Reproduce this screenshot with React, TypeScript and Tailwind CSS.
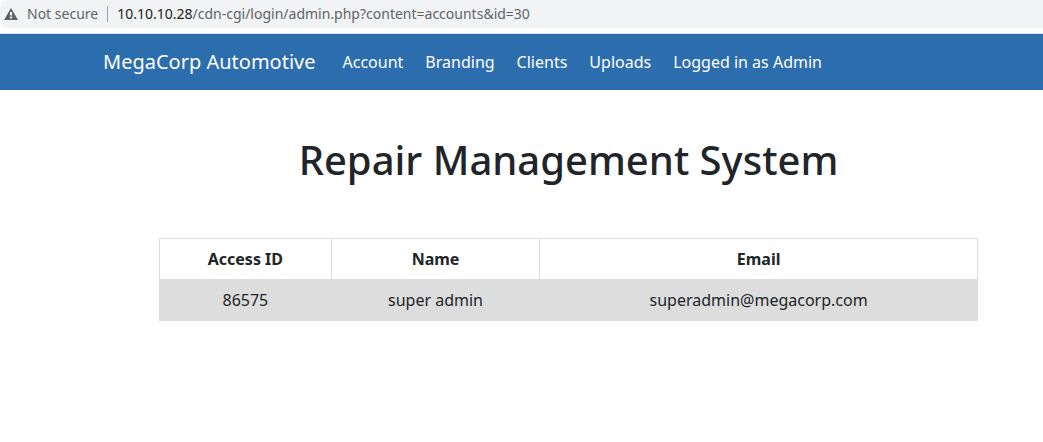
const links = ["Account", "Branding", "Clients", "Uploads", "Logged in as Admin"];

const accounts = [{ id: "86575", name: "super admin", email: "superadmin@megacorp.com" }];

function AddressBar() {
  return (
    <div className="border-b border-[#dadce0] bg-white pb-[5px]">
      <div className="flex h-7 items-center rounded-l-lg bg-[#f1f3f4] pl-1 text-sm text-[#5f6368]">
        <svg aria-hidden="true" viewBox="0 0 14 12" className="h-3 w-3.5 shrink-0" fill="#5f6368">
          <path fillRule="evenodd" d="M7 0 L14 12 H0 Z M6 4 V7.6 H8 V4 Z M6 8.6 V10.4 H8 V8.6 Z" />
        </svg>
        <span className="ml-[9px]">Not secure</span>
        <span className="mx-[9px] h-4 w-px bg-[#9aa0a6]" />
        <span className="whitespace-nowrap">
          <span className="text-[#202124]">10.10.10.28</span>/cdn-cgi/login/admin.php?content=accounts&amp;id=30
        </span>
      </div>
    </div>
  );
}

export default function App() {
  return (
    <div className="min-h-screen bg-white font-['Noto_Sans',sans-serif] text-[#212529]">
      <AddressBar />
      <nav className="flex h-14 items-center bg-[#2c6dad] pl-[103px] text-white">
        <a href="#home" className="mr-4 text-xl">MegaCorp Automotive</a>
        <ul className="flex">
          {links.map((label) => (
            <li key={label}>
              <a href="#section" className="px-[11px]">{label}</a>
            </li>
          ))}
        </ul>
      </nav>
      <main className="pt-[46px] pr-[65px] pl-[159px]">
        <h1 className="text-center text-[40px] leading-12 font-medium">Repair Management System</h1>
        <table className="mt-[54px] w-full border-collapse text-center">
          <thead>
            <tr>
              <th className="w-[21%] border border-[#dddddd] p-2 font-bold">Access ID</th>
              <th className="border border-[#dddddd] p-2 font-bold">Name</th>
              <th className="border border-[#dddddd] p-2 font-bold">Email</th>
            </tr>
          </thead>
          <tbody>
            {accounts.map((account) => (
              <tr key={account.id} className="bg-[#dddddd]">
                <td className="border border-[#dddddd] p-2">{account.id}</td>
                <td className="border border-[#dddddd] p-2">{account.name}</td>
                <td className="border border-[#dddddd] p-2">{account.email}</td>
              </tr>
            ))}
          </tbody>
        </table>
      </main>
    </div>
  );
}
